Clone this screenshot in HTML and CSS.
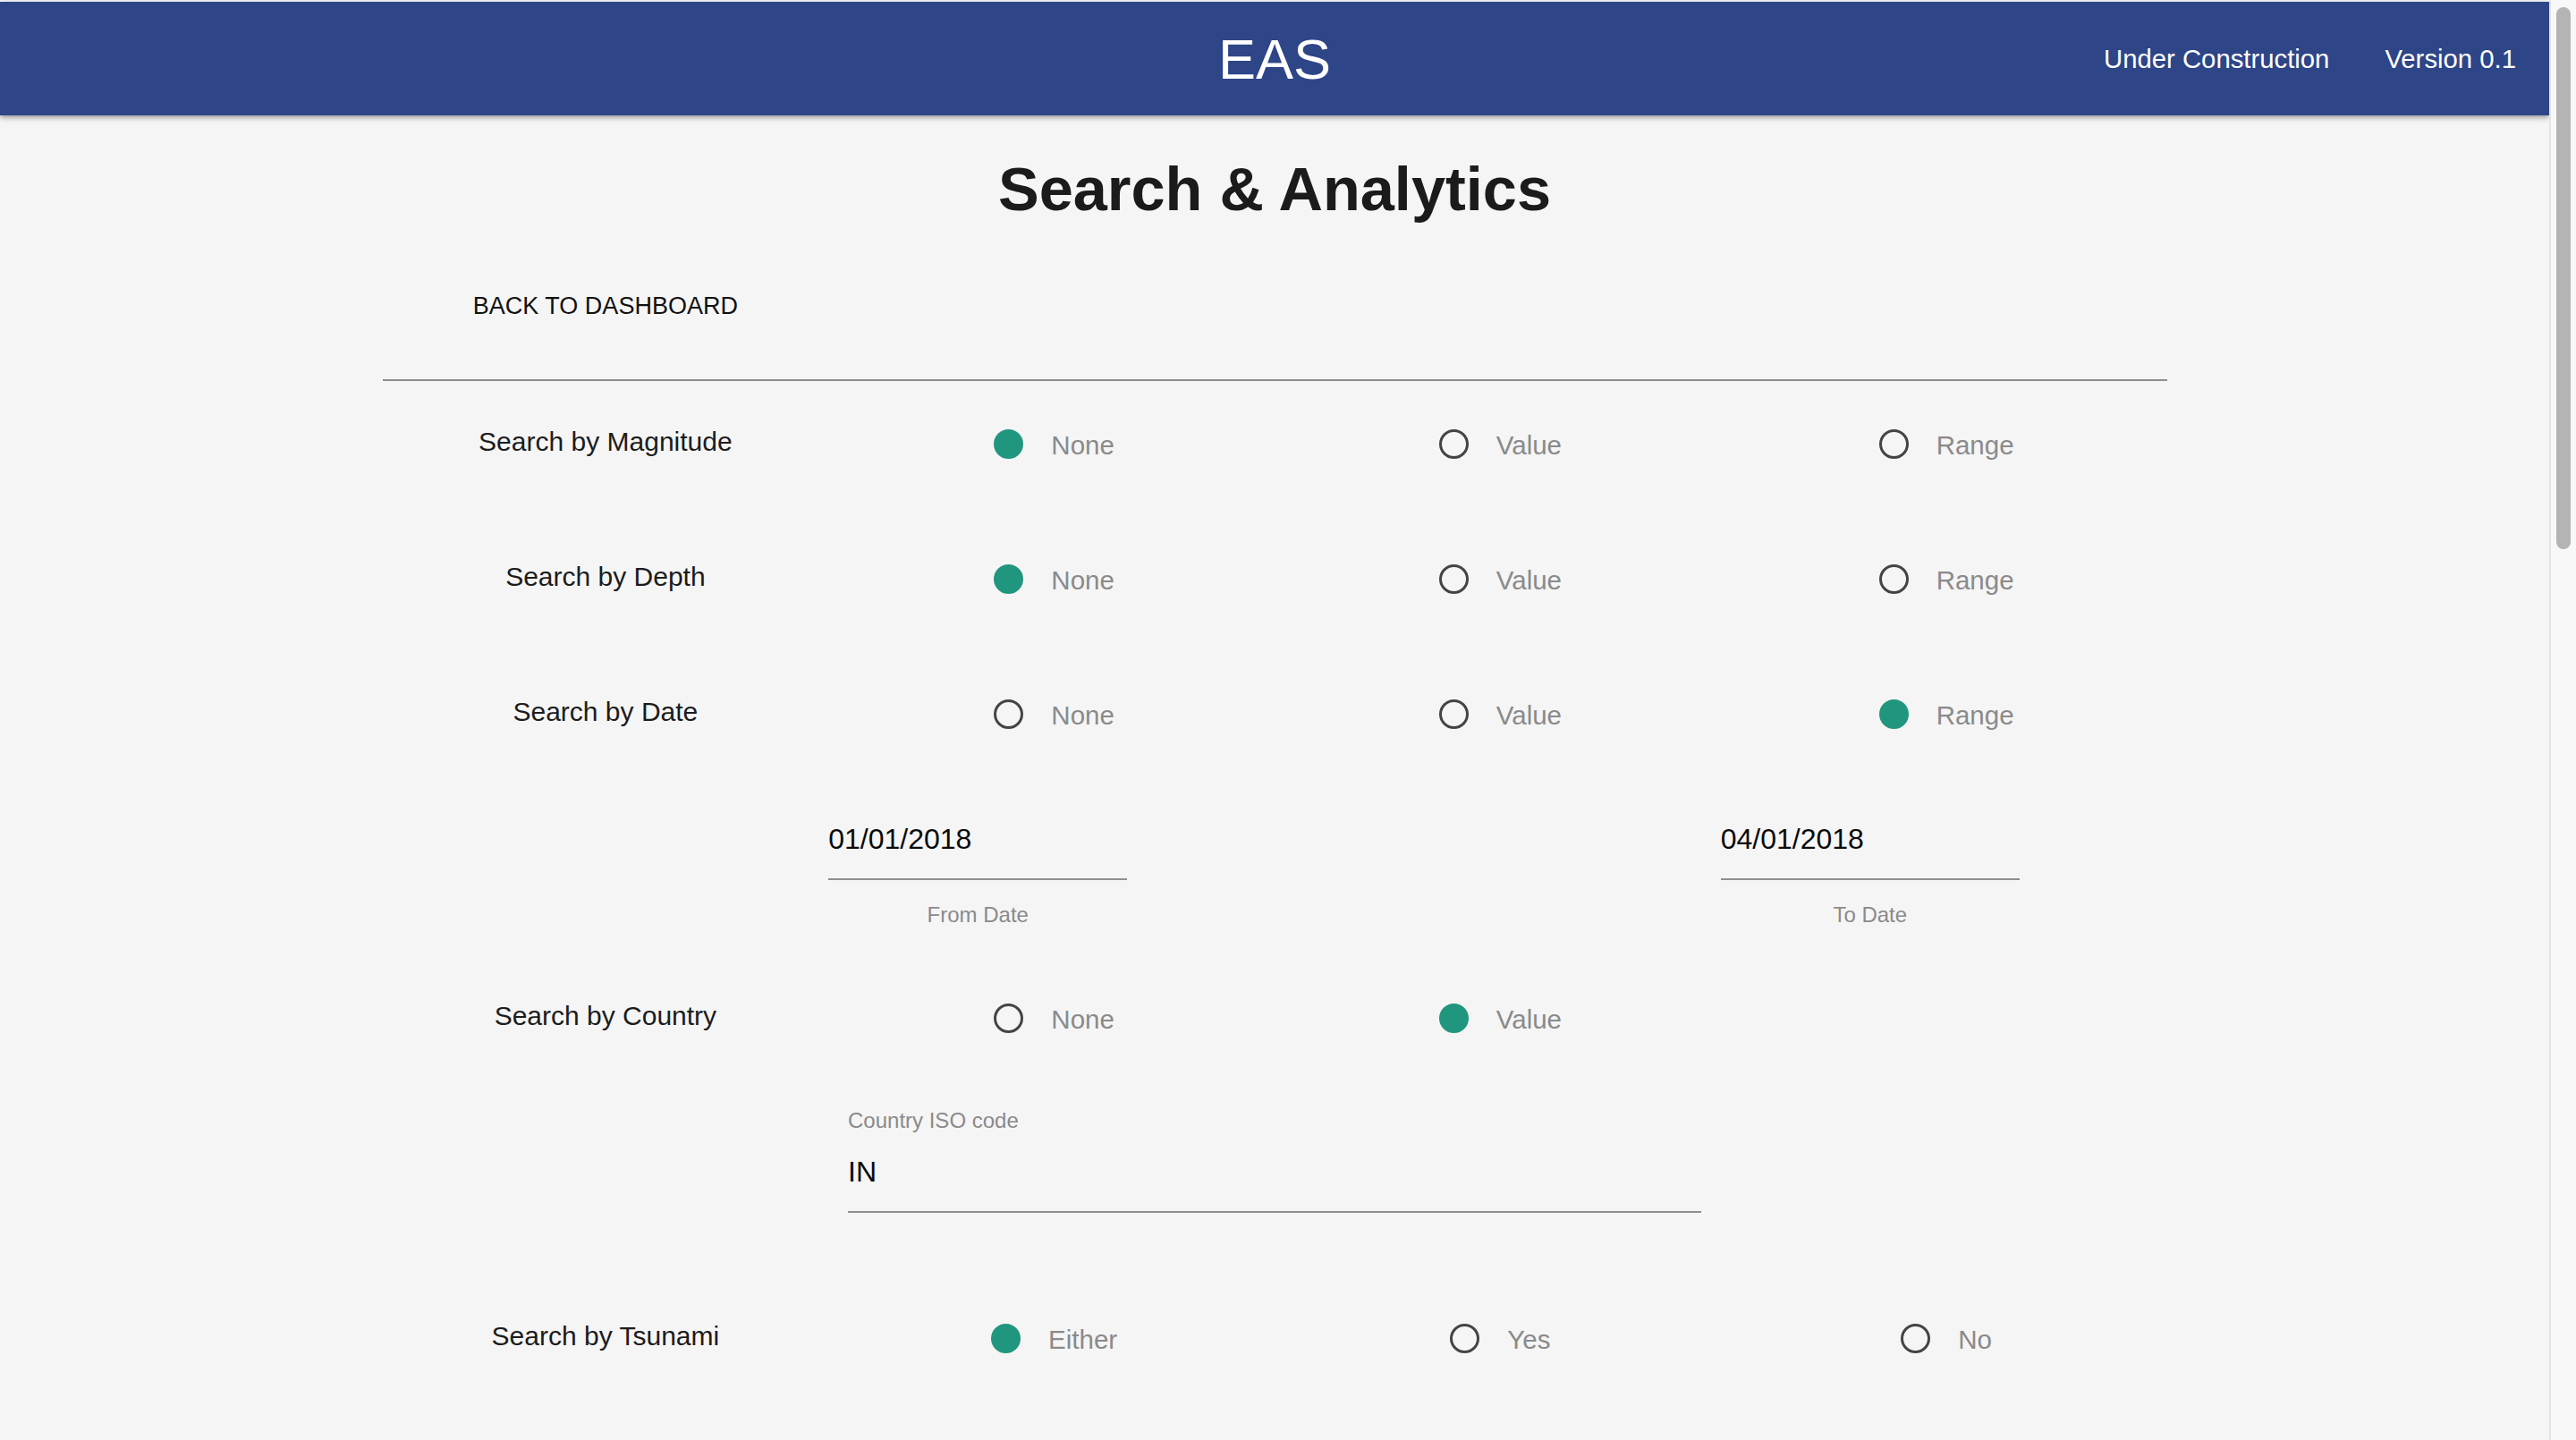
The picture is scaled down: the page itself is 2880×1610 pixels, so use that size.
FILE: index.html
```html
<!DOCTYPE html>
<html lang="en">
<head>
<meta charset="utf-8">
<title>EAS - Search &amp; Analytics</title>
<link rel="stylesheet" href="styles.css">
</head>
<body>
<div class="app">
  <header class="appbar">
    <div class="appbar-side"></div>
    <div class="brand">EAS</div>
    <nav class="appbar-nav">
      <span class="nav-item">Under Construction</span>
      <span class="nav-item">Version 0.1</span>
    </nav>
  </header>

  <main class="page">
    <h1 class="title">Search &amp; Analytics</h1>

    <div class="grid4 back-row">
      <a class="back-btn">BACK TO DASHBOARD</a>
    </div>

    <hr class="divider">

    <section class="filters">
      <div class="grid4 filter-row">
        <div class="filter-label">Search by Magnitude</div>
        <label class="radio is-checked"><span class="radio-dot"></span><span class="radio-text">None</span></label>
        <label class="radio"><span class="radio-dot"></span><span class="radio-text">Value</span></label>
        <label class="radio"><span class="radio-dot"></span><span class="radio-text">Range</span></label>
      </div>
      <div class="grid4 filter-row">
        <div class="filter-label">Search by Depth</div>
        <label class="radio is-checked"><span class="radio-dot"></span><span class="radio-text">None</span></label>
        <label class="radio"><span class="radio-dot"></span><span class="radio-text">Value</span></label>
        <label class="radio"><span class="radio-dot"></span><span class="radio-text">Range</span></label>
      </div>
      <div class="grid4 filter-row">
        <div class="filter-label">Search by Date</div>
        <label class="radio"><span class="radio-dot"></span><span class="radio-text">None</span></label>
        <label class="radio"><span class="radio-dot"></span><span class="radio-text">Value</span></label>
        <label class="radio is-checked"><span class="radio-dot"></span><span class="radio-text">Range</span></label>
      </div>
    </section>

    <div class="grid4 date-row">
      <div class="field date-field date-from">
        <div class="field-input">01/01/2018</div>
        <div class="field-helper">From Date</div>
      </div>
      <div class="field date-field date-to">
        <div class="field-input">04/01/2018</div>
        <div class="field-helper">To Date</div>
      </div>
    </div>

    <div class="grid4 filter-row country-row">
      <div class="filter-label">Search by Country</div>
      <label class="radio"><span class="radio-dot"></span><span class="radio-text">None</span></label>
      <label class="radio is-checked"><span class="radio-dot"></span><span class="radio-text">Value</span></label>
    </div>

    <div class="field iso-field">
      <div class="field-label">Country ISO code</div>
      <div class="field-input">IN</div>
    </div>

    <div class="grid4 filter-row tsunami-row">
      <div class="filter-label">Search by Tsunami</div>
      <label class="radio is-checked"><span class="radio-dot"></span><span class="radio-text">Either</span></label>
      <label class="radio"><span class="radio-dot"></span><span class="radio-text">Yes</span></label>
      <label class="radio"><span class="radio-dot"></span><span class="radio-text">No</span></label>
    </div>
  </main>
</div>
<div class="scroll-rail"><div class="scroll-thumb"></div></div>
</body>
</html>
```

FILE: styles.css
```css
html {
  overflow: hidden;
}

body {
  margin: 0;
  height: 100vh;
  display: flex;
  background: #f5f5f5;
  font-family: "Liberation Sans", Arial, Helvetica, sans-serif;
  color: #1c1c1c;
}

.app {
  flex: 1;
  min-width: 0;
  overflow: hidden;
}

.scroll-rail {
  flex: none;
  width: 30px;
  box-sizing: border-box;
  background: #f8f8f8;
  border-left: 2px solid #e4e4e4;
  padding: 8px 6px 0;
}

.scroll-thumb {
  width: 16px;
  height: 606px;
  border-radius: 8px;
  background: #b4b4b4;
}

.appbar {
  margin-top: 2px;
  height: 127px;
  background: #2e4588;
  color: #fff;
  display: grid;
  grid-template-columns: 1fr auto 1fr;
  align-items: center;
  box-shadow: 0 2px 4px -1px rgba(0, 0, 0, 0.2), 0 4px 5px 0 rgba(0, 0, 0, 0.14), 0 1px 10px 0 rgba(0, 0, 0, 0.12);
  position: relative;
}

.brand {
  font-size: 63px;
  line-height: 72px;
}

.appbar-nav {
  display: flex;
  justify-content: flex-end;
  gap: 62px;
  padding-right: 37px;
}

.nav-item {
  font-size: 29.3px;
  line-height: 40px;
}

.page {
  width: 70%;
  margin: 0 auto;
}

.title {
  margin: 43px 0 0;
  font-size: 68.5px;
  line-height: 80px;
  font-weight: bold;
  text-align: center;
  color: #1b1b1b;
}

.grid4 {
  display: grid;
  grid-template-columns: repeat(4, 1fr);
}

.back-row {
  padding-top: 70px;
}

.back-btn {
  justify-self: center;
  font-size: 27px;
  line-height: 40px;
  color: #111;
  cursor: pointer;
}

.divider {
  margin: 62px 0 0;
  border: 0;
  height: 2px;
  background: #8e8e8e;
}

.filters {
  margin-top: 10px;
  display: flex;
  flex-direction: column;
  gap: 31px;
}

.filter-row {
  height: 120px;
  align-items: center;
}

.filter-label {
  text-align: center;
  font-size: 30px;
  line-height: 40px;
  padding-bottom: 4px;
  color: #1c1c1c;
}

.radio {
  display: flex;
  justify-content: center;
  align-items: center;
  gap: 31px;
  padding-left: 6px;
  cursor: pointer;
}

.radio-dot {
  width: 33px;
  height: 33px;
  box-sizing: border-box;
  border-radius: 50%;
  border: 3.4px solid #444;
  flex: none;
}

.radio.is-checked .radio-dot {
  border-color: #21967f;
  background: #21967f;
}

.radio-text {
  font-size: 29.5px;
  line-height: 40px;
  padding-top: 3px;
  color: #8a8a8a;
}

.date-row {
  margin-top: 61px;
}

.date-field {
  width: 334px;
  justify-self: start;
}

.date-from {
  grid-column: 2;
}

.date-to {
  grid-column: 4;
}

.field-input {
  font-size: 32px;
  line-height: 38px;
  padding-bottom: 25px;
  border-bottom: 2px solid #8e8e8e;
  color: #0a0a0a;
}

.field-helper {
  margin-top: 25px;
  font-size: 24px;
  line-height: 28px;
  text-align: center;
  color: #8a8a8a;
}

.country-row {
  margin-top: 41px;
}

.iso-field {
  width: 954px;
  margin: 41px auto 0;
}

.field-label {
  font-size: 24px;
  line-height: 28px;
  margin-bottom: 24px;
  color: #8a8a8a;
}

.tsunami-row {
  margin-top: 80px;
}
```
